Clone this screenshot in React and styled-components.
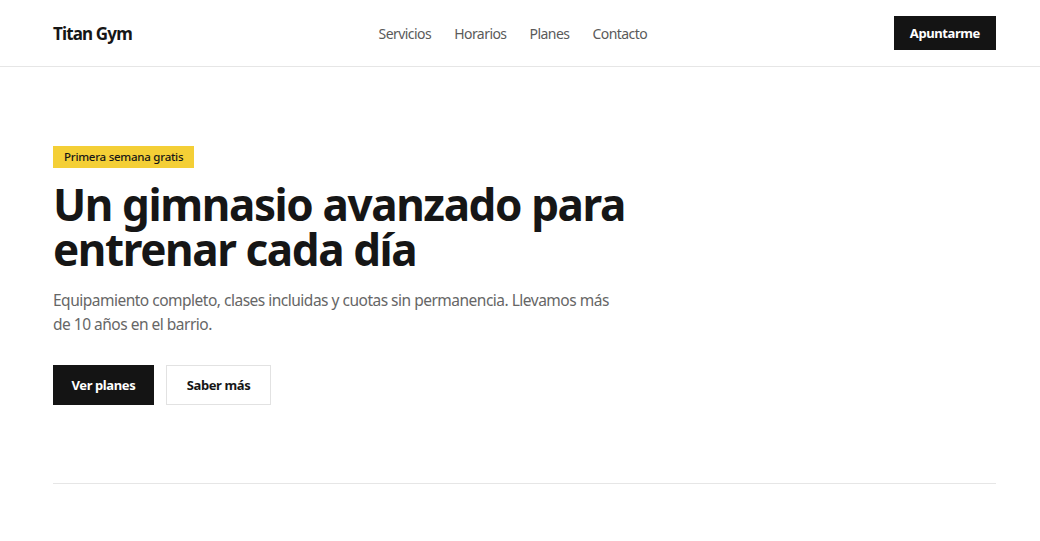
import React from "react";
import styled, { createGlobalStyle } from "styled-components";

const Global = createGlobalStyle`
  * { box-sizing: border-box; }
  html, body { margin: 0; padding: 0; background: #fff; }
  body { font-family: "Noto Sans", "Open Sans", sans-serif; color: #161616; }
`;

const Header = styled.header`
  height: 67px;
  border-bottom: 1px solid #e6e6e6;
  display: flex;
  align-items: center;
  justify-content: space-between;
  padding: 0 44px 0 53px;
`;

const Logo = styled.div`
  font-size: 17px;
  font-weight: 700;
  letter-spacing: -0.85px;
`;

const Nav = styled.nav`
  display: flex;
  gap: 23px;
`;

const NavLink = styled.a`
  font-size: 14px;
  color: #5a5a5a;
  text-decoration: none;
  letter-spacing: -0.55px;
`;

const Button = styled.button`
  font-family: inherit;
  font-size: 13px;
  font-weight: 700;
  height: ${(p) => p.$h || 40}px;
  padding: 0 ${(p) => p.$px || 17.5}px;
  background: ${(p) => (p.$dark ? "#141414" : "#fff")};
  color: ${(p) => (p.$dark ? "#fff" : "#161616")};
  border: 1px solid ${(p) => (p.$dark ? "#141414" : "#e2e2e2")};
  letter-spacing: -0.4px;
  cursor: pointer;
`;

const Main = styled.main`
  padding: 77px 44px 0 53px;
`;

const Badge = styled.span`
  display: inline-block;
  background: #f4cf36;
  color: #161616;
  font-size: 11.5px;
  font-weight: 500;
  height: 22px;
  line-height: 22px;
  padding: 0 11px;
  letter-spacing: -0.25px;
`;

const Title = styled.h1`
  margin: 14px 0 0;
  font-size: 44px;
  line-height: 45px;
  font-weight: 700;
  letter-spacing: -1.4px;
  max-width: 600px;
`;

const Lead = styled.p`
  margin: 16px 0 0;
  font-size: 15.5px;
  line-height: 24px;
  color: #666;
  max-width: 560px;
  letter-spacing: -0.5px;
`;

const Actions = styled.div`
  display: flex;
  gap: 12px;
  margin-top: 29px;
`;

const Divider = styled.hr`
  margin: 78px 0 0;
  border: 0;
  border-top: 1px solid #e6e6e6;
`;

export default function App() {
  return (
    <>
      <Global />
      <Header>
        <Logo>Titan Gym</Logo>
        <Nav>
          <NavLink href="#">Servicios</NavLink>
          <NavLink href="#">Horarios</NavLink>
          <NavLink href="#">Planes</NavLink>
          <NavLink href="#">Contacto</NavLink>
        </Nav>
        <Button $dark $h={34} $px={15}>Apuntarme</Button>
      </Header>
      <Main>
        <Badge>Primera semana gratis</Badge>
        <Title>Un gimnasio avanzado para entrenar cada día</Title>
        <Lead>
          Equipamiento completo, clases incluidas y cuotas sin permanencia. Llevamos más de 10 años en el barrio.
        </Lead>
        <Actions>
          <Button $dark>Ver planes</Button>
          <Button $px={20}>Saber más</Button>
        </Actions>
        <Divider />
      </Main>
    </>
  );
}
